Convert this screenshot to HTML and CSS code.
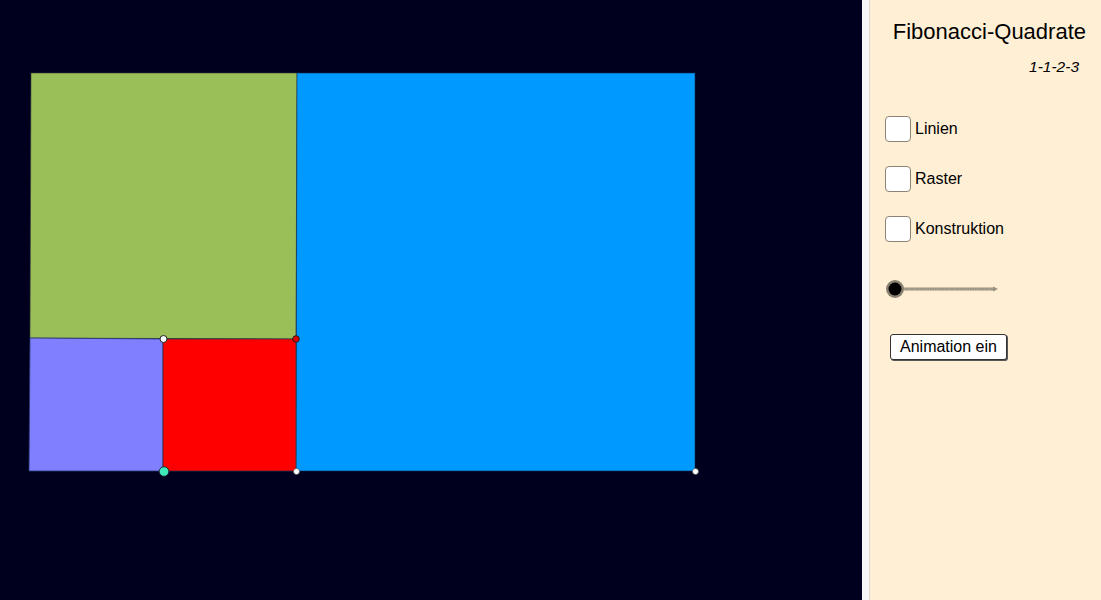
FILE: index.html
```html
<!DOCTYPE html>
<html>
<head>
<meta charset="utf-8">
<link rel="stylesheet" href="styles.css">
</head>
<body>
<div class="app">
  <div class="canvas">
    <svg class="drawing" width="862" height="600" viewBox="0 0 862 600">
      <polygon points="31,73 297,73 296,339 30,338" fill="#9bbf58" stroke="#3a3a40" stroke-width="0.6"/>
      <polygon points="297,73 695,73 695,471 296,471" fill="#0099ff" stroke="#1a3050" stroke-width="0.6"/>
      <polygon points="30,338 163,339 163,471 29,471" fill="#7f7fff" stroke="#2a3a70" stroke-width="0.8"/>
      <polygon points="163,339 296,339 296,471 163,471" fill="#ff0000" stroke="#333344" stroke-width="0.8"/>
      <circle cx="163.5" cy="339" r="3.5" fill="#ffffff" stroke="#222" stroke-width="1"/>
      <circle cx="296" cy="339" r="3.3" fill="#e00000" stroke="#222" stroke-width="1"/>
      <circle cx="164" cy="471.5" r="4.8" fill="#3ee8b8" stroke="#1a2a30" stroke-width="1"/>
      <circle cx="296.5" cy="471.5" r="3" fill="#ffffff" stroke="#444" stroke-width="0.6"/>
      <circle cx="695.5" cy="471.5" r="3" fill="#ffffff" stroke="#444" stroke-width="0.6"/>
    </svg>
  </div>
  <div class="divider"></div>
  <div class="panel">
    <h1 class="title">Fibonacci-Quadrate</h1>
    <div class="subtitle">1-1-2-3</div>
    <div class="checks">
      <label class="check"><span class="box"></span><span class="lbl">Linien</span></label>
      <label class="check"><span class="box"></span><span class="lbl">Raster</span></label>
      <label class="check"><span class="box"></span><span class="lbl">Konstruktion</span></label>
    </div>
    <div class="slider">
      <svg width="120" height="22" viewBox="0 0 120 22">
        <line x1="10" y1="11" x2="110" y2="11" stroke="#9a9282" stroke-width="3"/>
        <line x1="14" y1="11" x2="108" y2="11" stroke="#c8c0b0" stroke-width="0.8" stroke-dasharray="1 1.5"/>
        <polygon points="108,8.5 113,11 108,13.5" fill="#9a9282"/>
        <circle cx="10" cy="11" r="9" fill="#8a8272"/>
        <circle cx="10" cy="11" r="6.5" fill="#000"/>
      </svg>
    </div>
    <button class="btn">Animation ein</button>
  </div>
</div>
</body>
</html>
```

FILE: styles.css
```css
html, body {
  margin: 0;
  padding: 0;
}
body {
  width: 1101px;
  height: 600px;
  overflow: hidden;
  font-family: "Liberation Sans", Arial, sans-serif;
}
.app {
  display: flex;
  height: 600px;
}
.canvas {
  width: 862px;
  height: 600px;
  background: #00001e;
  flex: none;
}
.drawing {
  display: block;
}
.divider {
  width: 7px;
  flex: none;
  background: #f6f6f8;
  border-right: 1px solid #dcd8d0;
}
.panel {
  flex: 1;
  background: #ffefd5;
  display: flex;
  flex-direction: column;
  padding: 0 0 0 15px;
}
.title {
  margin: 19px 15px 0 0;
  font-size: 22px;
  font-weight: normal;
  color: #000;
  text-align: right;
  line-height: 26px;
}
.subtitle {
  margin: 13px 22px 0 0;
  text-align: right;
  font-style: italic;
  font-size: 15.5px;
  line-height: 18px;
}
.checks {
  margin-top: 40px;
  display: flex;
  flex-direction: column;
  gap: 24px;
}
.check {
  display: flex;
  align-items: center;
  gap: 4px;
  height: 26px;
}
.box {
  width: 24px;
  height: 24px;
  border: 1px solid #8c8474;
  border-radius: 4px;
  background: #fff;
  box-sizing: content-box;
}
.lbl {
  font-size: 16px;
  color: #000;
}
.slider {
  margin-top: 36px;
  margin-left: 0;
  height: 22px;
}
.slider svg {
  display: block;
}
.btn {
  align-self: flex-start;
  margin-top: 34px;
  margin-left: 5px;
  height: 26px;
  padding: 0 9px;
  font-family: "Liberation Sans", Arial, sans-serif;
  font-size: 16px;
  color: #000;
  background: #fff;
  border: 1px solid #333;
  border-radius: 3px;
  box-shadow: 1px 1px 0 #555;
}
```
